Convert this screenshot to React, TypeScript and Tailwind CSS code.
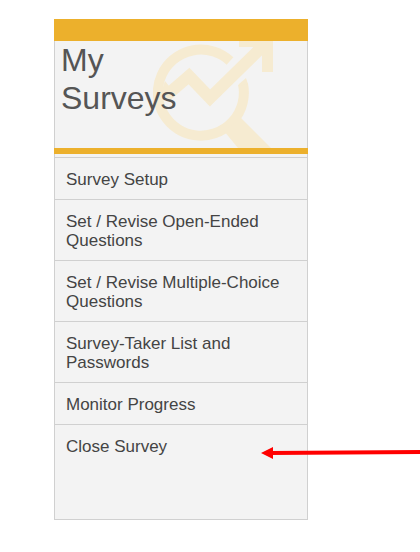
const links = [
  'Survey Setup',
  'Set / Revise Open-Ended Questions',
  'Set / Revise Multiple-Choice Questions',
  'Survey-Taker List and Passwords',
  'Monitor Progress',
  'Close Survey',
];

function TrendGlass() {
  return (
    <svg
      className="absolute top-0 right-[34px] h-[107px] w-[120px]"
      viewBox="0 0 120 107"
      fill="none"
      stroke="#f6ebd1"
      aria-hidden="true"
    >
      {/* lens, open where the arrow leaves it */}
      <path d="M77 20A43 43 0 1 0 90 43" strokeWidth="10" />
      <path d="M85 45L86 43L93 37L95 43Z" fill="#f6ebd1" stroke="none" />
      {/* trend line */}
      <path d="M14 54L36 35L57 57L112 3" strokeWidth="12" />
      <path d="M12 40L20 50L18 61L8 52Z" fill="#f6ebd1" stroke="none" />
      <path d="M86 0H120V31H109V6H86Z" fill="#f6ebd1" stroke="none" />
      {/* handle */}
      <path d="M71 90L88 77L118 107H85Z" fill="#f6ebd1" stroke="none" />
    </svg>
  );
}

function Pointer() {
  return (
    <svg
      className="pointer-events-none absolute top-5 left-full -ml-[47px] h-4 w-40"
      viewBox="0 0 160 16"
      aria-hidden="true"
    >
      <path d="M10 8L160 7" stroke="#ff0000" strokeWidth="4" />
      <path d="M1 8L13 2V14Z" fill="#ff0000" />
    </svg>
  );
}

export default function App() {
  return (
    <main className="overflow-hidden bg-white pt-[19px] pb-8 font-['Liberation_Sans',Arial,sans-serif]">
      <nav aria-labelledby="menu-title" className="mr-28 ml-[54px]">
        <header className="border-t-[22px] border-b-6 border-[#ecb02c] bg-[#f3f3f3]">
          <div className="relative h-[107px] border-x border-[#d0d0d0] px-1.5">
            <TrendGlass />
            <h1 id="menu-title" className="relative w-32 text-[32px] leading-[38px] text-[#555555]">
              My Surveys
            </h1>
          </div>
        </header>

        <div className="border-x border-b border-[#d0d0d0] bg-[#f3f3f3] pt-[3px] pb-[53px]">
          <ul>
            {links.map((label) => (
              <li key={label} className="relative border-t border-[#d0d0d0]">
                <a href="#" className="block px-[11px] pt-3 pb-2.5 text-[17px] leading-[19px] text-[#444444]">
                  {label}
                </a>
                {label === 'Close Survey' && <Pointer />}
              </li>
            ))}
          </ul>
        </div>
      </nav>
    </main>
  );
}
